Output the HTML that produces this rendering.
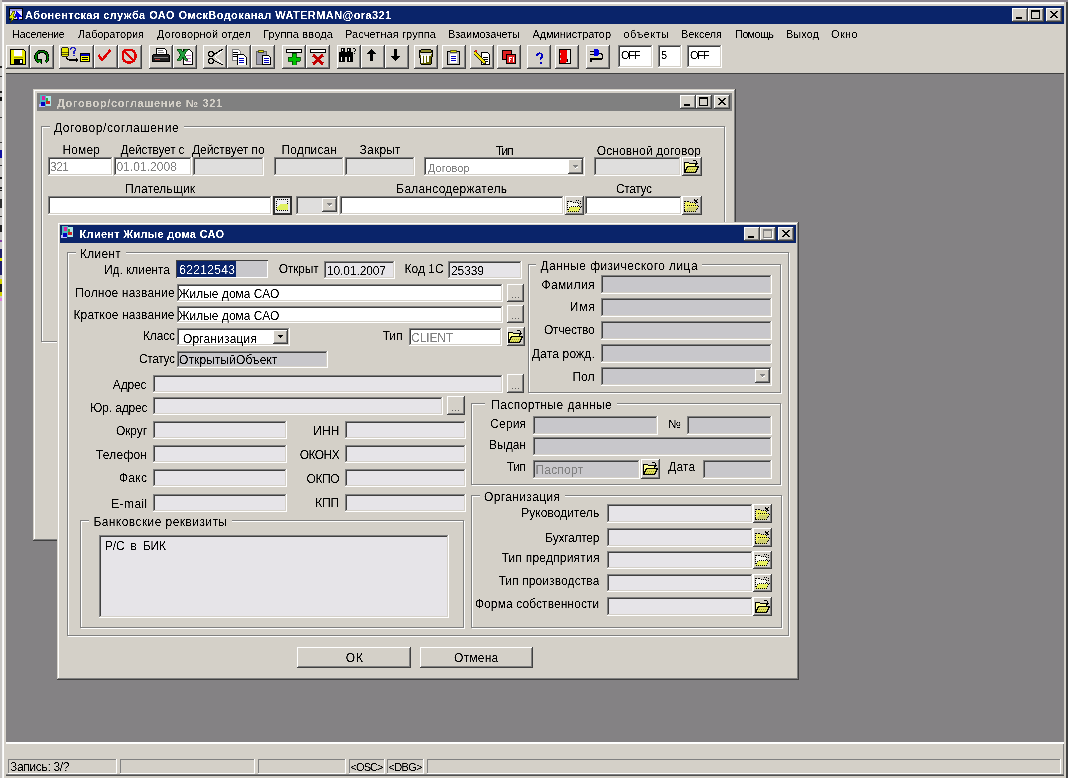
<!DOCTYPE html>
<html><head><meta charset="utf-8"><style>
html,body{margin:0;padding:0;}
body{width:1068px;height:778px;overflow:hidden;position:relative;background:#d4d0c8;font-family:"Liberation Sans",sans-serif;}
div,span,svg{position:absolute;}
svg{shape-rendering:crispEdges;}
span{white-space:pre;line-height:normal;filter:url(#th);}
div{box-sizing:border-box;}
</style></head><body>
<svg width="0" height="0" style="position:absolute"><filter id="th"><feComponentTransfer><feFuncA type="table" tableValues="0 0 1 1"/></feComponentTransfer></filter></svg>
<div style="left:0px;top:0px;width:1068px;height:778px;background:#d4d0c8"></div>
<div style="left:0px;top:0px;width:1068px;height:2px;background:#8c8690"></div>
<div style="left:0px;top:0px;width:2px;height:778px;background:#c8c6c4"></div>
<div style="left:0px;top:66px;width:2px;height:2px;background:#202020"></div>
<div style="left:0px;top:76px;width:2px;height:1px;background:#303030"></div>
<div style="left:0px;top:91px;width:2px;height:2px;background:#202020"></div>
<div style="left:0px;top:97px;width:2px;height:4px;background:#101010"></div>
<div style="left:0px;top:117px;width:2px;height:1px;background:#404040"></div>
<div style="left:0px;top:142px;width:2px;height:1px;background:#404040"></div>
<div style="left:0px;top:150px;width:2px;height:8px;background:#1010a0"></div>
<div style="left:0px;top:165px;width:2px;height:1px;background:#303030"></div>
<div style="left:0px;top:177px;width:2px;height:2px;background:#202020"></div>
<div style="left:0px;top:187px;width:2px;height:2px;background:#303030"></div>
<div style="left:0px;top:190px;width:2px;height:1px;background:#202020"></div>
<div style="left:0px;top:199px;width:2px;height:9px;background:#303030"></div>
<div style="left:0px;top:216px;width:2px;height:1px;background:#303030"></div>
<div style="left:0px;top:225px;width:2px;height:7px;background:#202020"></div>
<div style="left:0px;top:240px;width:2px;height:2px;background:#8040a0"></div>
<div style="left:0px;top:249px;width:2px;height:26px;background:#20206a"></div>
<div style="left:0px;top:258px;width:2px;height:3px;background:#e0e000"></div>
<div style="left:0px;top:279px;width:2px;height:17px;background:#d0d000"></div>
<div style="left:0px;top:284px;width:2px;height:8px;background:#202020"></div>
<div style="left:0px;top:298px;width:2px;height:3px;background:#e080e0"></div>
<div style="left:2px;top:2px;width:1066px;height:776px;box-shadow:inset 1px 1px #f4f4f4,inset 2px 2px #fff;background:#d4d0c8"></div>
<div style="left:1066px;top:2px;width:2px;height:776px;background:#404040"></div>
<div style="left:1064px;top:2px;width:2px;height:776px;background:#d4d0c8"></div>
<div style="left:6px;top:6px;width:1058px;height:18px;background:#0a246a"></div>
<svg style="position:absolute;left:8px;top:7px" width="16" height="16" viewBox="0 0 16 16">
<rect x="1.5" y="1.5" width="13" height="11" fill="#e0e0ff" stroke="#000"/><rect x="2" y="2" width="12" height="2" fill="#9090e0"/>
<path d="M8 4l6 6h-3l1 3h-2l-1-3l-2 1z" fill="#0000e0"/>
<path d="M5 4l-4 7h3l-2 5l6-7h-3l2-5z" fill="#e0f000" stroke="#303000" stroke-width="0.7"/></svg>
<span style="left:25.0px;top:9px;font-size:11px;color:#fff;font-weight:bold;letter-spacing:0.42px;">Абонентская служба ОАО ОмскВодоканал WATERMAN@ora321</span>
<div style="left:1012px;top:8px;width:16px;height:14px;box-shadow:inset -1px -1px #404040,inset 1px 1px #fff,inset -2px -2px #808080,inset 2px 2px #d4d0c8;background:#d4d0c8"></div>
<div style="left:1028px;top:8px;width:16px;height:14px;box-shadow:inset -1px -1px #404040,inset 1px 1px #fff,inset -2px -2px #808080,inset 2px 2px #d4d0c8;background:#d4d0c8"></div>
<div style="left:1046px;top:8px;width:16px;height:14px;box-shadow:inset -1px -1px #404040,inset 1px 1px #fff,inset -2px -2px #808080,inset 2px 2px #d4d0c8;background:#d4d0c8"></div>
<div style="left:1016px;top:17px;width:6px;height:2px;background:#000"></div>
<div style="left:1031px;top:10px;width:9px;height:9px;box-sizing:border-box;border:1px solid #000;border-top-width:2px"></div>
<svg style="position:absolute;left:1050px;top:11px" width="8" height="7" viewBox="0 0 8 7"><path d="M0 0h1v1h-1zM1 0h1v1h-1zM6 0h1v1h-1zM7 0h1v1h-1zM1 1h1v1h-1zM2 1h1v1h-1zM5 1h1v1h-1zM6 1h1v1h-1zM2 2h1v1h-1zM3 2h1v1h-1zM4 2h1v1h-1zM5 2h1v1h-1zM3 3h1v1h-1zM4 3h1v1h-1zM2 4h1v1h-1zM3 4h1v1h-1zM4 4h1v1h-1zM5 4h1v1h-1zM1 5h1v1h-1zM2 5h1v1h-1zM5 5h1v1h-1zM6 5h1v1h-1zM0 6h1v1h-1zM1 6h1v1h-1zM6 6h1v1h-1zM7 6h1v1h-1z" fill="#000"/></svg>
<span style="left:12.0px;top:28px;font-size:11px;color:#000;letter-spacing:-0.40px;">Население</span>
<span style="left:78.0px;top:28px;font-size:11px;color:#000;letter-spacing:-0.10px;">Лаборатория</span>
<span style="left:157.0px;top:28px;font-size:11px;color:#000;letter-spacing:0.13px;">Договорной отдел</span>
<span style="left:263.0px;top:28px;font-size:11px;color:#000;letter-spacing:0.19px;">Группа ввода</span>
<span style="left:345.0px;top:28px;font-size:11px;color:#000;letter-spacing:0.08px;">Расчетная группа</span>
<span style="left:448.0px;top:28px;font-size:11px;color:#000;letter-spacing:-0.14px;">Взаимозачеты</span>
<span style="left:532.5px;top:28px;font-size:11px;color:#000;letter-spacing:-0.07px;">Администратор</span>
<span style="left:623.5px;top:28px;font-size:11px;color:#000;letter-spacing:0.43px;">объекты</span>
<span style="left:681.0px;top:28px;font-size:11px;color:#000;letter-spacing:-0.17px;">Векселя</span>
<span style="left:735.0px;top:28px;font-size:11px;color:#000;letter-spacing:-0.70px;">Помощь</span>
<span style="left:786.0px;top:28px;font-size:11px;color:#000;letter-spacing:0.02px;">Выход</span>
<span style="left:831.0px;top:28px;font-size:11px;color:#000;letter-spacing:0.35px;">Окно</span>
<div style="left:6px;top:45px;width:24px;height:24px;box-shadow:inset -1px -1px #404040,inset 1px 1px #fff,inset -2px -2px #808080,inset 2px 2px #d4d0c8;background:#d4d0c8"></div>
<div style="left:30px;top:45px;width:24px;height:24px;box-shadow:inset -1px -1px #404040,inset 1px 1px #fff,inset -2px -2px #808080,inset 2px 2px #d4d0c8;background:#d4d0c8"></div>
<div style="left:59px;top:45px;width:35px;height:24px;box-shadow:inset -1px -1px #404040,inset 1px 1px #fff,inset -2px -2px #808080,inset 2px 2px #d4d0c8;background:#d4d0c8"></div>
<div style="left:94px;top:45px;width:24px;height:24px;box-shadow:inset -1px -1px #404040,inset 1px 1px #fff,inset -2px -2px #808080,inset 2px 2px #d4d0c8;background:#d4d0c8"></div>
<div style="left:118px;top:45px;width:24px;height:24px;box-shadow:inset -1px -1px #404040,inset 1px 1px #fff,inset -2px -2px #808080,inset 2px 2px #d4d0c8;background:#d4d0c8"></div>
<div style="left:149px;top:45px;width:24px;height:24px;box-shadow:inset -1px -1px #404040,inset 1px 1px #fff,inset -2px -2px #808080,inset 2px 2px #d4d0c8;background:#d4d0c8"></div>
<div style="left:173px;top:45px;width:24px;height:24px;box-shadow:inset -1px -1px #404040,inset 1px 1px #fff,inset -2px -2px #808080,inset 2px 2px #d4d0c8;background:#d4d0c8"></div>
<div style="left:203px;top:45px;width:24px;height:24px;box-shadow:inset -1px -1px #404040,inset 1px 1px #fff,inset -2px -2px #808080,inset 2px 2px #d4d0c8;background:#d4d0c8"></div>
<div style="left:227px;top:45px;width:24px;height:24px;box-shadow:inset -1px -1px #404040,inset 1px 1px #fff,inset -2px -2px #808080,inset 2px 2px #d4d0c8;background:#d4d0c8"></div>
<div style="left:251px;top:45px;width:24px;height:24px;box-shadow:inset -1px -1px #404040,inset 1px 1px #fff,inset -2px -2px #808080,inset 2px 2px #d4d0c8;background:#d4d0c8"></div>
<div style="left:282px;top:45px;width:24px;height:24px;box-shadow:inset -1px -1px #404040,inset 1px 1px #fff,inset -2px -2px #808080,inset 2px 2px #d4d0c8;background:#d4d0c8"></div>
<div style="left:306px;top:45px;width:24px;height:24px;box-shadow:inset -1px -1px #404040,inset 1px 1px #fff,inset -2px -2px #808080,inset 2px 2px #d4d0c8;background:#d4d0c8"></div>
<div style="left:337px;top:45px;width:24px;height:24px;box-shadow:inset -1px -1px #404040,inset 1px 1px #fff,inset -2px -2px #808080,inset 2px 2px #d4d0c8;background:#d4d0c8"></div>
<div style="left:361px;top:45px;width:24px;height:24px;box-shadow:inset -1px -1px #404040,inset 1px 1px #fff,inset -2px -2px #808080,inset 2px 2px #d4d0c8;background:#d4d0c8"></div>
<div style="left:385px;top:45px;width:24px;height:24px;box-shadow:inset -1px -1px #404040,inset 1px 1px #fff,inset -2px -2px #808080,inset 2px 2px #d4d0c8;background:#d4d0c8"></div>
<div style="left:414px;top:45px;width:24px;height:24px;box-shadow:inset -1px -1px #404040,inset 1px 1px #fff,inset -2px -2px #808080,inset 2px 2px #d4d0c8;background:#d4d0c8"></div>
<div style="left:442px;top:45px;width:24px;height:24px;box-shadow:inset -1px -1px #404040,inset 1px 1px #fff,inset -2px -2px #808080,inset 2px 2px #d4d0c8;background:#d4d0c8"></div>
<div style="left:470px;top:45px;width:24px;height:24px;box-shadow:inset -1px -1px #404040,inset 1px 1px #fff,inset -2px -2px #808080,inset 2px 2px #d4d0c8;background:#d4d0c8"></div>
<div style="left:497px;top:45px;width:24px;height:24px;box-shadow:inset -1px -1px #404040,inset 1px 1px #fff,inset -2px -2px #808080,inset 2px 2px #d4d0c8;background:#d4d0c8"></div>
<div style="left:527px;top:45px;width:24px;height:24px;box-shadow:inset -1px -1px #404040,inset 1px 1px #fff,inset -2px -2px #808080,inset 2px 2px #d4d0c8;background:#d4d0c8"></div>
<div style="left:555px;top:45px;width:24px;height:24px;box-shadow:inset -1px -1px #404040,inset 1px 1px #fff,inset -2px -2px #808080,inset 2px 2px #d4d0c8;background:#d4d0c8"></div>
<div style="left:586px;top:45px;width:24px;height:24px;box-shadow:inset -1px -1px #404040,inset 1px 1px #fff,inset -2px -2px #808080,inset 2px 2px #d4d0c8;background:#d4d0c8"></div>
<svg style="position:absolute;left:10px;top:49px" width="16" height="16" viewBox="0 0 16 16"><path d="M0.5 0.5h13l2 2v13h-15z" fill="#e8e800" stroke="#000"/><rect x="4" y="1" width="8" height="6" fill="#fff"/><path d="M3.5 8.5h9" stroke="#a0a000"/><rect x="4" y="10" width="9" height="6" fill="#000"/><rect x="10" y="11" width="2" height="3" fill="#fff"/></svg>
<svg style="position:absolute;left:34px;top:49px" width="16" height="16" viewBox="0 0 16 16"><path d="M5 13.5A6 6 0 1 1 11.5 13" fill="none" stroke="#000" stroke-width="3.2"/><path d="M5 13.5A6 6 0 1 1 11.5 13" fill="none" stroke="#008000" stroke-width="1.4"/><path d="M2 10h6v6z" fill="#000"/><path d="M3.5 11h3.5v3.5z" fill="#008000"/></svg>
<svg style="position:absolute;left:61px;top:47px" width="30" height="17" viewBox="0 0 30 17"><ellipse cx="4" cy="2" rx="3.5" ry="1.5" fill="#e8e800" stroke="#000" stroke-width="0.8"/><path d="M0.5 2v6a3.5 1.5 0 0 0 7 0v-6" fill="#e8e800" stroke="#000" stroke-width="0.8"/><path d="M0.5 4.5a3.5 1.5 0 0 0 7 0M0.5 6.5a3.5 1.5 0 0 0 7 0" fill="none" stroke="#000" stroke-width="0.6"/>
<path d="M10 2.5a2.2 2.2 0 1 1 3 2v2" fill="none" stroke="#2020c0" stroke-width="1.4"/><rect x="12" y="7.5" width="1.5" height="1.5" fill="#2020c0"/>
<path d="M5 10q1 3 4 3h6" fill="none" stroke="#000" stroke-width="1.3"/><path d="M15 11l3 2l-3 2z" fill="#000"/>
<rect x="19.5" y="6.5" width="9" height="8" fill="#ffff00" stroke="#000"/><rect x="20" y="7" width="8" height="2" fill="#0000c0"/><path d="M21 10.5h6M21 12.5h6" stroke="#000"/></svg>
<svg style="position:absolute;left:98px;top:49px" width="16" height="16" viewBox="0 0 16 16"><path d="M0.5 6l3.5 5l8.5-10" fill="none" stroke="#e00000" stroke-width="2.4"/></svg>
<svg style="position:absolute;left:122px;top:49px" width="16" height="16" viewBox="0 0 16 16"><circle cx="7" cy="7" r="6.6" fill="none" stroke="#e00000" stroke-width="2.6"/><path d="M2.5 2.5l9 9" stroke="#e00000" stroke-width="2.6"/></svg>
<svg style="position:absolute;left:152px;top:48px" width="19" height="15" viewBox="0 0 19 15"><path d="M4.5 0.5h8l2 2v4h-10z" fill="#fff" stroke="#000"/><path d="M6 2h5M6 4h6" stroke="#808080"/><path d="M0.5 8.5q0-2 2-2h13q2 0 2 2v4q0 1-1 1h-15q-1 0-1-1z" fill="#202020" stroke="#000"/><path d="M2 9h14" stroke="#808080"/><path d="M3 11h5" stroke="#c04040"/></svg>
<svg style="position:absolute;left:177px;top:49px" width="16" height="16" viewBox="0 0 16 16"><path d="M6.5 0.5h6l3 3v12h-9z" fill="#fff" stroke="#000"/><path d="M9 6h5M9 9h5M9 12h5" stroke="#c080c0"/><path d="M0 0h4l2 3l2-3h3l-3.5 5.5l3.5 5.5h-3l-2-3l-2 3h-4l3.5-5.5z" fill="#20a040" stroke="#004000" stroke-width="0.8"/></svg>
<svg style="position:absolute;left:207px;top:49px" width="16" height="16" viewBox="0 0 16 16"><circle cx="4" cy="5" r="2.5" fill="none" stroke="#000" stroke-width="1.6"/><circle cx="4" cy="12" r="2.5" fill="none" stroke="#000" stroke-width="1.6"/><path d="M6 6l10-6M6 11l10 5" stroke="#000" stroke-width="1.3"/><path d="M8 8l8-7M8 8l8 7" stroke="#fff" stroke-width="1"/></svg>
<svg style="position:absolute;left:231px;top:49px" width="16" height="16" viewBox="0 0 16 16"><path d="M1 0h6l2 2v9h-8z" fill="#fff" stroke="#808080"/><path d="M2 3h5M2 5h5M2 7h5" stroke="#000"/><path d="M6.5 5.5h6l2.5 2.5v8h-8.5z" fill="#fff" stroke="#000"/><path d="M8 9h5M8 11h5M8 13h5" stroke="#0000c0" stroke-width="1"/></svg>
<svg style="position:absolute;left:255px;top:49px" width="16" height="16" viewBox="0 0 16 16"><path d="M1.5 2.5h10v13h-10z" fill="#a0a0b0" stroke="#606060"/><path d="M4 1h4l1 2h-6z" fill="#e0e000" stroke="#000" stroke-width="0.6"/><path d="M7.5 6.5h6l2 2v7h-8z" fill="#fff" stroke="#000"/><path d="M9 9h5M9 11h5M9 13h5" stroke="#0000c0"/></svg>
<svg style="position:absolute;left:286px;top:49px" width="16" height="16" viewBox="0 0 16 16"><rect x="0.5" y="0.5" width="15" height="3" fill="#fff" stroke="#000"/><path d="M6 4h4v4h4v4h-4v4h-4v-4h-4v-4h4z" fill="#00c000" stroke="#004000" stroke-width="0.8"/></svg>
<svg style="position:absolute;left:310px;top:49px" width="16" height="16" viewBox="0 0 16 16"><rect x="0.5" y="0.5" width="15" height="3" fill="#fff" stroke="#000"/><path d="M3 6l10 9M13 6l-10 9" stroke="#c00000" stroke-width="3"/></svg>
<svg style="position:absolute;left:339px;top:48px" width="18" height="15" viewBox="0 0 18 15"><path d="M2 0h4v4h-4zM8 0h4v4h-4zM0 4h7v10h-7zM7 4h7v10h-7z" fill="#000"/><path d="M3 1h1v2h-1zM9 1h1v2h-1zM2 9h1v4h-1zM10 9h1v4h-1z" fill="#fff"/><path d="M6 9h2v5h-2z" fill="#d4d0c8"/><path d="M14 0h2v1h-2zM16 1h1v2h-1zM15 3h1v1h-1zM15 5h1v1h-1z" fill="#000"/></svg>
<svg style="position:absolute;left:365px;top:49px" width="16" height="16" viewBox="0 0 16 16"><path d="M6 0l5 5h-3.5v7h-3v-7h-3.5z" fill="#000"/></svg>
<svg style="position:absolute;left:389px;top:49px" width="16" height="16" viewBox="0 0 16 16"><path d="M6 12l5-5h-3.5v-7h-3v7h-3.5z" fill="#000"/></svg>
<svg style="position:absolute;left:418px;top:49px" width="16" height="16" viewBox="0 0 16 16"><path d="M1 2c0-1 14-1 14 0l-2 13h-10z" fill="#606000" stroke="#000"/><path d="M2 4h12l-1 3h-10z" fill="#e0e0e0"/><path d="M4 6v8M7 6v8M10 6v7" stroke="#fff" stroke-width="1.3"/><ellipse cx="8" cy="2" rx="6" ry="1.5" fill="#909030" stroke="#000"/></svg>
<svg style="position:absolute;left:446px;top:49px" width="16" height="16" viewBox="0 0 16 16"><rect x="1.5" y="2.5" width="12" height="13" fill="#c0c0c0" stroke="#000" stroke-width="1.5"/><rect x="4" y="5" width="7" height="9" fill="#fff"/><path d="M5 7h5M5 9h5M5 11h5" stroke="#0000c0"/><path d="M5 1h5l1 2h-7z" fill="#e0e000" stroke="#000" stroke-width="0.6"/></svg>
<svg style="position:absolute;left:474px;top:49px" width="16" height="16" viewBox="0 0 16 16"><path d="M7.5 3.5h6l2 2v10h-8z" fill="#fff" stroke="#000"/><path d="M9 8h5M9 10h5M9 12h5" stroke="#000"/><path d="M1 2l10 10l1 3l-3-1l-10-10z" fill="#f0e000" stroke="#000" stroke-width="0.8"/><circle cx="2" cy="2" r="1.6" fill="#e02020"/></svg>
<svg style="position:absolute;left:501px;top:49px" width="16" height="16" viewBox="0 0 16 16"><rect x="1.5" y="1.5" width="9" height="9" fill="#e02020" stroke="#000" stroke-width="1.2"/><rect x="5.5" y="5.5" width="9" height="9" fill="#e02020" stroke="#000" stroke-width="1.2"/><path d="M8 8v5M8 8h3M8 10h2M12 8v5" stroke="#fff" stroke-width="1"/></svg>
<svg style="position:absolute;left:531px;top:49px" width="16" height="16" viewBox="0 0 16 16"><path d="M6 7a2.6 2.6 0 1 1 3.5 2.3v2" fill="none" stroke="#0000c0" stroke-width="1.8"/><rect x="8.5" y="13" width="2" height="2" fill="#0000c0"/></svg>
<svg style="position:absolute;left:559px;top:49px" width="16" height="16" viewBox="0 0 16 16"><rect x="0.5" y="0.5" width="11" height="14" fill="#e8f4f0" stroke="#000"/><path d="M1 1h7v12l-2 1h-5z" fill="#f00000"/><path d="M1 4h1v2h-1zM1 9h1v2h-1z" fill="#d4d0c8"/><path d="M8 10h1v3h-1z" fill="#000"/></svg>
<svg style="position:absolute;left:590px;top:49px" width="16" height="16" viewBox="0 0 16 16"><path d="M0 2h4v1.4h-4zM0 5h4v1.4h-4z" fill="#000"/><path d="M4 0h3a2.5 3.5 0 0 1 0 7h-3z" fill="#0000e0"/><path d="M9 4.5h1.5a2 2.7 0 0 1 0 5.5h-9.5v3" fill="none" stroke="#000" stroke-width="1.4"/><path d="M2 8.5h7" stroke="#e0e080"/></svg>
<div style="left:618px;top:45px;width:35px;height:23px;background:#fff;box-shadow:inset -1px -1px #fff,inset 1px 1px #808080,inset -2px -2px #d4d0c8,inset 2px 2px #404040"></div>
<span style="left:621.0px;top:49px;font-size:11px;color:#000;letter-spacing:-1.25px;">OFF</span>
<div style="left:658px;top:45px;width:24px;height:23px;background:#fff;box-shadow:inset -1px -1px #fff,inset 1px 1px #808080,inset -2px -2px #d4d0c8,inset 2px 2px #404040"></div>
<span style="left:661.0px;top:49px;font-size:11px;color:#000;letter-spacing:-0.62px;">5</span>
<div style="left:687px;top:45px;width:35px;height:23px;background:#fff;box-shadow:inset -1px -1px #fff,inset 1px 1px #808080,inset -2px -2px #d4d0c8,inset 2px 2px #404040"></div>
<span style="left:690.0px;top:49px;font-size:11px;color:#000;letter-spacing:-1.25px;">OFF</span>
<div style="left:6px;top:73px;width:1058px;height:669px;background:#848284;box-shadow:inset 0 1px #404040"></div>
<div style="left:6px;top:742px;width:1058px;height:34px;background:#d4d0c8;box-shadow:inset 0 2px #fff,inset -1px 0 #808080"></div>
<div style="left:6px;top:774px;width:1058px;height:1px;background:#808080"></div>
<div style="left:6px;top:775px;width:1058px;height:1px;background:#505050"></div>
<div style="left:8px;top:759px;width:109px;height:15px;box-shadow:inset -1px -1px #fff,inset 1px 1px #808080"></div>
<div style="left:120px;top:759px;width:135px;height:15px;box-shadow:inset -1px -1px #fff,inset 1px 1px #808080"></div>
<div style="left:258px;top:759px;width:88px;height:15px;box-shadow:inset -1px -1px #fff,inset 1px 1px #808080"></div>
<div style="left:349px;top:759px;width:36px;height:15px;box-shadow:inset -1px -1px #fff,inset 1px 1px #808080"></div>
<div style="left:387px;top:759px;width:37px;height:15px;box-shadow:inset -1px -1px #fff,inset 1px 1px #808080"></div>
<div style="left:427px;top:759px;width:634px;height:15px;box-shadow:inset -1px -1px #fff,inset 1px 1px #808080"></div>
<span style="left:10.0px;top:760px;font-size:12px;color:#000;letter-spacing:-0.32px;">Запись: 3/?</span>
<span style="left:350.5px;top:761px;font-size:11px;color:#000;letter-spacing:-0.92px;">&lt;OSC&gt;</span>
<span style="left:388.5px;top:761px;font-size:11px;color:#000;letter-spacing:-0.67px;">&lt;DBG&gt;</span>
<div style="left:33px;top:89px;width:703px;height:452px;box-shadow:inset -1px -1px #404040,inset 1px 1px #d4d0c8,inset -2px -2px #808080,inset 2px 2px #fff;background:#d4d0c8"></div>
<div style="left:37px;top:93px;width:695px;height:18px;background:#808080"></div>
<svg style="position:absolute;left:39px;top:95px" width="13" height="13" viewBox="0 0 13 13"><rect x="1" y="0" width="6" height="11" fill="#50b8c0"/><rect x="7" y="1" width="5" height="10" fill="#b0e8e8"/><rect x="0" y="9" width="6" height="3" fill="#c0c0ff"/>
<circle cx="4.5" cy="3" r="2" fill="#e020a0"/><circle cx="9" cy="7.5" r="2" fill="#d02020"/><rect x="2" y="7" width="4" height="3.5" fill="#0000c0"/><rect x="7" y="3" width="2" height="3" fill="#30a040"/></svg>
<span style="left:57.0px;top:97px;font-size:11px;color:#d4d0c8;font-weight:bold;letter-spacing:0.62px;">Договор/соглашение № 321</span>
<div style="left:680px;top:95px;width:16px;height:14px;box-shadow:inset -1px -1px #404040,inset 1px 1px #fff,inset -2px -2px #808080,inset 2px 2px #d4d0c8;background:#d4d0c8"></div>
<div style="left:696px;top:95px;width:16px;height:14px;box-shadow:inset -1px -1px #404040,inset 1px 1px #fff,inset -2px -2px #808080,inset 2px 2px #d4d0c8;background:#d4d0c8"></div>
<div style="left:714px;top:95px;width:16px;height:14px;box-shadow:inset -1px -1px #404040,inset 1px 1px #fff,inset -2px -2px #808080,inset 2px 2px #d4d0c8;background:#d4d0c8"></div>
<div style="left:684px;top:104px;width:6px;height:2px;background:#000"></div>
<div style="left:699px;top:97px;width:9px;height:9px;box-sizing:border-box;border:1px solid #000;border-top-width:2px"></div>
<svg style="position:absolute;left:718px;top:98px" width="8" height="7" viewBox="0 0 8 7"><path d="M0 0h1v1h-1zM1 0h1v1h-1zM6 0h1v1h-1zM7 0h1v1h-1zM1 1h1v1h-1zM2 1h1v1h-1zM5 1h1v1h-1zM6 1h1v1h-1zM2 2h1v1h-1zM3 2h1v1h-1zM4 2h1v1h-1zM5 2h1v1h-1zM3 3h1v1h-1zM4 3h1v1h-1zM2 4h1v1h-1zM3 4h1v1h-1zM4 4h1v1h-1zM5 4h1v1h-1zM1 5h1v1h-1zM2 5h1v1h-1zM5 5h1v1h-1zM6 5h1v1h-1zM0 6h1v1h-1zM1 6h1v1h-1zM6 6h1v1h-1zM7 6h1v1h-1z" fill="#000"/></svg>
<div style="left:41px;top:126px;width:684px;height:216px;border:1px solid #808080;box-shadow:1px 1px 0 #fff,inset 1px 1px 0 #fff;box-sizing:border-box"></div>
<div style="left:50px;top:124px;width:134px;height:4px;background:#d4d0c8"></div>
<span style="left:54.0px;top:121px;font-size:12px;color:#000;letter-spacing:0.53px;">Договор/соглашение</span>
<span style="left:62.5px;top:143px;font-size:12px;color:#000;letter-spacing:0.14px;">Номер</span>
<span style="left:120.6px;top:143px;font-size:12px;color:#000;letter-spacing:-0.21px;">Действует с</span>
<span style="left:192.0px;top:143px;font-size:12px;color:#000;letter-spacing:-0.05px;">Действует по</span>
<span style="left:281.5px;top:143px;font-size:12px;color:#000;letter-spacing:0.14px;">Подписан</span>
<span style="left:359.6px;top:143px;font-size:12px;color:#000;letter-spacing:0.21px;">Закрыт</span>
<span style="left:496.0px;top:144px;font-size:12px;color:#000;letter-spacing:-1.25px;">Тип</span>
<span style="left:596.8px;top:144px;font-size:12px;color:#000;letter-spacing:0.11px;">Основной договор</span>
<div style="left:48px;top:157px;width:65px;height:19px;background:#fff;box-shadow:inset -1px -1px #fff,inset 1px 1px #808080,inset -2px -2px #d4d0c8,inset 2px 2px #404040"></div>
<span style="left:50.0px;top:160px;font-size:12px;color:#808080;letter-spacing:-0.51px;">321</span>
<div style="left:114px;top:157px;width:78px;height:19px;background:#fff;box-shadow:inset -1px -1px #fff,inset 1px 1px #808080,inset -2px -2px #d4d0c8,inset 2px 2px #404040"></div>
<span style="left:116.4px;top:160px;font-size:12px;color:#808080;letter-spacing:0.06px;">01.01.2008</span>
<div style="left:193px;top:157px;width:71px;height:19px;background:#dfdedd;box-shadow:inset -1px -1px #fff,inset 1px 1px #808080,inset -2px -2px #d4d0c8,inset 2px 2px #404040"></div>
<div style="left:274px;top:157px;width:70px;height:19px;background:#dfdedd;box-shadow:inset -1px -1px #fff,inset 1px 1px #808080,inset -2px -2px #d4d0c8,inset 2px 2px #404040"></div>
<div style="left:345px;top:157px;width:70px;height:19px;background:#dfdedd;box-shadow:inset -1px -1px #fff,inset 1px 1px #808080,inset -2px -2px #d4d0c8,inset 2px 2px #404040"></div>
<div style="left:424px;top:157px;width:161px;height:19px;background:#fff;box-shadow:inset -1px -1px #fff,inset 1px 1px #808080,inset -2px -2px #d4d0c8,inset 2px 2px #404040"></div>
<span style="left:428.0px;top:162px;font-size:11px;color:#808080;">Договор</span>
<div style="left:568px;top:159px;width:15px;height:15px;box-shadow:inset -1px -1px #404040,inset 1px 1px #fff,inset -2px -2px #808080,inset 2px 2px #d4d0c8;background:#d4d0c8"></div>
<div style="left:573px;top:165px;width:5px;height:1px;background:#808080"></div>
<div style="left:574px;top:166px;width:3px;height:1px;background:#808080"></div>
<div style="left:575px;top:167px;width:1px;height:1px;background:#808080"></div>
<div style="left:576px;top:167px;width:2px;height:1px;background:#fff"></div>
<div style="left:575px;top:168px;width:1px;height:1px;background:#fff"></div>
<div style="left:594px;top:157px;width:87px;height:19px;background:#dfdedd;box-shadow:inset -1px -1px #fff,inset 1px 1px #808080,inset -2px -2px #d4d0c8,inset 2px 2px #404040"></div>
<div style="left:682px;top:157px;width:20px;height:19px;box-shadow:inset -1px -1px #404040,inset 1px 1px #fff,inset -2px -2px #808080,inset 2px 2px #d4d0c8;background:#d4d0c8"></div>
<svg style="position:absolute;left:684px;top:160px" width="15" height="13" viewBox="0 0 15 13"><path d="M0.5 2.5h4l1 1h6v8.5h-11z" fill="#ffff99" stroke="#000"/>
<path d="M0.5 12.5l3-6h11l-3 6z" fill="#e0e060" stroke="#000"/><path d="M3 11h8M4 9h8" stroke="#a0a020" stroke-dasharray="1 1"/>
<path d="M8.5 1.5c1-1 3-1 4 0v2" fill="none" stroke="#000"/><path d="M11 3h3l-1.5 2z" fill="#000"/></svg>
<span style="left:125.0px;top:182px;font-size:12px;color:#000;letter-spacing:0.14px;">Плательщик</span>
<span style="left:396.3px;top:182px;font-size:12px;color:#000;letter-spacing:0.24px;">Балансодержатель</span>
<span style="left:616.0px;top:182px;font-size:12px;color:#000;letter-spacing:-0.39px;">Статус</span>
<div style="left:48px;top:196px;width:224px;height:19px;background:#fff;box-shadow:inset -1px -1px #fff,inset 1px 1px #808080,inset -2px -2px #d4d0c8,inset 2px 2px #404040"></div>
<div style="left:273px;top:196px;width:19px;height:19px;background:#e8e8e8;border:2px solid #303030"></div>
<svg style="position:absolute;left:276px;top:199px" width="13" height="13" viewBox="0 0 13 13">
<path d="M0.5 0.5h11v11h-11z" fill="#f0f0f0" stroke="#000" stroke-dasharray="1 1"/><path d="M1 8l3-3h8v6h-11z" fill="#e0f060"/><path d="M1 11.5h11" stroke="#000" stroke-dasharray="1 1"/></svg>
<div style="left:296px;top:196px;width:43px;height:19px;background:#dfdedd;box-shadow:inset -1px -1px #fff,inset 1px 1px #808080,inset -2px -2px #d4d0c8,inset 2px 2px #404040"></div>
<div style="left:322px;top:198px;width:15px;height:14px;box-shadow:inset -1px -1px #404040,inset 1px 1px #fff,inset -2px -2px #808080,inset 2px 2px #d4d0c8;background:#d4d0c8"></div>
<div style="left:327px;top:203px;width:5px;height:1px;background:#808080"></div>
<div style="left:328px;top:204px;width:3px;height:1px;background:#808080"></div>
<div style="left:329px;top:205px;width:1px;height:1px;background:#808080"></div>
<div style="left:330px;top:205px;width:2px;height:1px;background:#fff"></div>
<div style="left:329px;top:206px;width:1px;height:1px;background:#fff"></div>
<div style="left:340px;top:196px;width:224px;height:19px;background:#fff;box-shadow:inset -1px -1px #fff,inset 1px 1px #808080,inset -2px -2px #d4d0c8,inset 2px 2px #404040"></div>
<div style="left:565px;top:196px;width:19px;height:19px;box-shadow:inset -1px -1px #404040,inset 1px 1px #fff,inset -2px -2px #808080,inset 2px 2px #d4d0c8;background:#d4d0c8"></div>
<svg style="position:absolute;left:567px;top:199px" width="15" height="13" viewBox="0 0 15 13"><path d="M0.5 2.5h4l1 1h6v8.5h-11z" fill="#f8f8f0" stroke="#000" stroke-dasharray="1 1"/>
<path d="M0.5 12.5l3-5h11l-3 5z" fill="#e8f060" stroke="#000" stroke-dasharray="1 1"/>
<path d="M9 1.5h1M11 1h1M13 2v1M13 4v1" stroke="#000"/></svg>
<div style="left:585px;top:196px;width:97px;height:19px;background:#fff;box-shadow:inset -1px -1px #fff,inset 1px 1px #808080,inset -2px -2px #d4d0c8,inset 2px 2px #404040"></div>
<div style="left:682px;top:196px;width:20px;height:19px;box-shadow:inset -1px -1px #404040,inset 1px 1px #fff,inset -2px -2px #808080,inset 2px 2px #d4d0c8;background:#d4d0c8"></div>
<svg style="position:absolute;left:684px;top:199px" width="15" height="13" viewBox="0 0 15 13"><path d="M0.5 2.5h4l1 1h6v8.5h-11z" fill="#f0f060" stroke="#000" stroke-dasharray="1 1"/>
<path d="M0.5 12.5l3-6h11l-3 6z" fill="#d0d070" stroke="#000" stroke-dasharray="1 1"/><path d="M1 12l3-5h10" fill="none" stroke="#f0f060"/>
<path d="M10 0.5l3.5 3.5M13.5 0.5l-3.5 3.5" stroke="#000"/></svg>
<div style="left:57px;top:222px;width:742px;height:458px;box-shadow:inset -1px -1px #404040,inset 1px 1px #d4d0c8,inset -2px -2px #808080,inset 2px 2px #fff;background:#d4d0c8"></div>
<div style="left:60px;top:225px;width:736px;height:18px;background:#0a246a"></div>
<svg style="position:absolute;left:61px;top:226px" width="13" height="13" viewBox="0 0 13 13"><rect x="1" y="0" width="6" height="11" fill="#50b8c0"/><rect x="7" y="1" width="5" height="10" fill="#b0e8e8"/><rect x="0" y="9" width="6" height="3" fill="#c0c0ff"/>
<circle cx="4.5" cy="3" r="2" fill="#e020a0"/><circle cx="9" cy="7.5" r="2" fill="#d02020"/><rect x="2" y="7" width="4" height="3.5" fill="#0000c0"/><rect x="7" y="3" width="2" height="3" fill="#30a040"/></svg>
<span style="left:79.6px;top:228px;font-size:11px;color:#fff;font-weight:bold;letter-spacing:0.29px;">Клиент Жилые дома САО</span>
<div style="left:744px;top:227px;width:16px;height:14px;box-shadow:inset -1px -1px #404040,inset 1px 1px #fff,inset -2px -2px #808080,inset 2px 2px #d4d0c8;background:#d4d0c8"></div>
<div style="left:760px;top:227px;width:16px;height:14px;box-shadow:inset -1px -1px #404040,inset 1px 1px #fff,inset -2px -2px #808080,inset 2px 2px #d4d0c8;background:#d4d0c8"></div>
<div style="left:778px;top:227px;width:16px;height:14px;box-shadow:inset -1px -1px #404040,inset 1px 1px #fff,inset -2px -2px #808080,inset 2px 2px #d4d0c8;background:#d4d0c8"></div>
<div style="left:748px;top:236px;width:6px;height:2px;background:#000"></div>
<div style="left:763px;top:229px;width:9px;height:9px;box-sizing:border-box;border:1px solid #808080;border-top-width:2px"></div>
<div style="left:764px;top:231px;width:9px;height:8px;box-sizing:border-box;border-right:1px solid #fff;border-bottom:1px solid #fff"></div>
<svg style="position:absolute;left:782px;top:230px" width="8" height="7" viewBox="0 0 8 7"><path d="M0 0h1v1h-1zM1 0h1v1h-1zM6 0h1v1h-1zM7 0h1v1h-1zM1 1h1v1h-1zM2 1h1v1h-1zM5 1h1v1h-1zM6 1h1v1h-1zM2 2h1v1h-1zM3 2h1v1h-1zM4 2h1v1h-1zM5 2h1v1h-1zM3 3h1v1h-1zM4 3h1v1h-1zM2 4h1v1h-1zM3 4h1v1h-1zM4 4h1v1h-1zM5 4h1v1h-1zM1 5h1v1h-1zM2 5h1v1h-1zM5 5h1v1h-1zM6 5h1v1h-1zM0 6h1v1h-1zM1 6h1v1h-1zM6 6h1v1h-1zM7 6h1v1h-1z" fill="#000"/></svg>
<div style="left:67px;top:252px;width:722px;height:384px;border:1px solid #808080;box-shadow:1px 1px 0 #fff,inset 1px 1px 0 #fff;box-sizing:border-box"></div>
<div style="left:76px;top:250px;width:50px;height:4px;background:#d4d0c8"></div>
<span style="left:80.0px;top:247px;font-size:12px;color:#000;letter-spacing:0.26px;">Клиент</span>
<span style="left:104.0px;top:263px;font-size:12px;color:#000;letter-spacing:-0.07px;">Ид. клиента</span>
<div style="left:176px;top:260px;width:92px;height:18px;background:#c8c7cb;box-shadow:inset 1px 1px #404040,inset -1px -1px #fff"></div>
<div style="left:177px;top:261px;width:59px;height:16px;background:#0a246a"></div>
<span style="left:179.3px;top:263px;font-size:12px;color:#fff;letter-spacing:0.33px;">62212543</span>
<span style="left:278.8px;top:262px;font-size:12px;color:#000;letter-spacing:-0.17px;">Открыт</span>
<div style="left:324px;top:261px;width:71px;height:18px;background:#e6e4e8;box-shadow:inset -1px -1px #fff,inset 1px 1px #808080,inset -2px -2px #d4d0c8,inset 2px 2px #404040"></div>
<span style="left:327.0px;top:264px;font-size:12px;color:#000;letter-spacing:-0.12px;">10.01.2007</span>
<span style="left:404.6px;top:262px;font-size:12px;color:#000;letter-spacing:-0.02px;">Код 1С</span>
<div style="left:448px;top:261px;width:74px;height:18px;background:#e6e4e8;box-shadow:inset -1px -1px #fff,inset 1px 1px #808080,inset -2px -2px #d4d0c8,inset 2px 2px #404040"></div>
<span style="left:451.0px;top:264px;font-size:12px;color:#000;letter-spacing:-0.09px;">25339</span>
<span style="left:75.3px;top:286px;font-size:12px;color:#000;letter-spacing:0.17px;">Полное название</span>
<div style="left:177px;top:284px;width:326px;height:18px;background:#fff;box-shadow:inset -1px -1px #fff,inset 1px 1px #808080,inset -2px -2px #d4d0c8,inset 2px 2px #404040"></div>
<span style="left:178.4px;top:287px;font-size:12px;color:#000;letter-spacing:0.01px;">Жилые дома САО</span>
<div style="left:507px;top:284px;width:17px;height:18px;box-shadow:inset -1px -1px #404040,inset 1px 1px #fff,inset -2px -2px #808080,inset 2px 2px #d4d0c8;background:#d4d0c8"></div>
<div style="left:512px;top:297px;width:1px;height:1px;background:#606060"></div>
<div style="left:515px;top:297px;width:1px;height:1px;background:#606060"></div>
<div style="left:518px;top:297px;width:1px;height:1px;background:#606060"></div>
<span style="left:73.5px;top:308px;font-size:12px;color:#000;letter-spacing:0.12px;">Краткое название</span>
<div style="left:177px;top:306px;width:326px;height:17px;background:#fff;box-shadow:inset -1px -1px #fff,inset 1px 1px #808080,inset -2px -2px #d4d0c8,inset 2px 2px #404040"></div>
<span style="left:178.4px;top:309px;font-size:12px;color:#000;letter-spacing:0.01px;">Жилые дома САО</span>
<div style="left:507px;top:305px;width:17px;height:18px;box-shadow:inset -1px -1px #404040,inset 1px 1px #fff,inset -2px -2px #808080,inset 2px 2px #d4d0c8;background:#d4d0c8"></div>
<div style="left:512px;top:318px;width:1px;height:1px;background:#606060"></div>
<div style="left:515px;top:318px;width:1px;height:1px;background:#606060"></div>
<div style="left:518px;top:318px;width:1px;height:1px;background:#606060"></div>
<span style="left:143.0px;top:329px;font-size:12px;color:#000;letter-spacing:-0.17px;">Класс</span>
<div style="left:177px;top:328px;width:113px;height:18px;background:#fff;box-shadow:inset -1px -1px #fff,inset 1px 1px #808080,inset -2px -2px #d4d0c8,inset 2px 2px #404040"></div>
<span style="left:183.0px;top:332px;font-size:12px;color:#000;letter-spacing:0.16px;">Организация</span>
<div style="left:273px;top:330px;width:15px;height:14px;box-shadow:inset -1px -1px #404040,inset 1px 1px #fff,inset -2px -2px #808080,inset 2px 2px #d4d0c8;background:#d4d0c8"></div>
<div style="left:278px;top:335px;width:5px;height:1px;background:#000"></div>
<div style="left:279px;top:336px;width:3px;height:1px;background:#000"></div>
<div style="left:280px;top:337px;width:1px;height:1px;background:#000"></div>
<span style="left:382.5px;top:329px;font-size:12px;color:#000;">Тип</span>
<div style="left:409px;top:328px;width:93px;height:18px;background:#fff;box-shadow:inset -1px -1px #fff,inset 1px 1px #808080,inset -2px -2px #d4d0c8,inset 2px 2px #404040"></div>
<span style="left:411.2px;top:331px;font-size:12px;color:#808080;letter-spacing:-0.13px;">CLIENT</span>
<div style="left:507px;top:327px;width:18px;height:19px;box-shadow:inset -1px -1px #404040,inset 1px 1px #fff,inset -2px -2px #808080,inset 2px 2px #d4d0c8;background:#d4d0c8"></div>
<svg style="position:absolute;left:508px;top:330px" width="15" height="13" viewBox="0 0 15 13"><path d="M0.5 2.5h4l1 1h6v8.5h-11z" fill="#ffff99" stroke="#000"/>
<path d="M0.5 12.5l3-6h11l-3 6z" fill="#e0e060" stroke="#000"/><path d="M3 11h8M4 9h8" stroke="#a0a020" stroke-dasharray="1 1"/>
<path d="M8.5 1.5c1-1 3-1 4 0v2" fill="none" stroke="#000"/><path d="M11 3h3l-1.5 2z" fill="#000"/></svg>
<span style="left:139.0px;top:352px;font-size:12px;color:#000;letter-spacing:-0.39px;">Статус</span>
<div style="left:177px;top:351px;width:151px;height:17px;background:#c8c7cb;box-shadow:inset -1px -1px #fff,inset 1px 1px #808080,inset -2px -2px #d4d0c8,inset 2px 2px #404040"></div>
<span style="left:179.0px;top:353px;font-size:12px;color:#000;letter-spacing:0.11px;">ОткрытыйОбъект</span>
<span style="left:112.8px;top:378px;font-size:12px;color:#000;letter-spacing:-0.16px;">Адрес</span>
<div style="left:153px;top:375px;width:350px;height:18px;background:#e6e4e8;box-shadow:inset -1px -1px #fff,inset 1px 1px #808080,inset -2px -2px #d4d0c8,inset 2px 2px #404040"></div>
<div style="left:507px;top:374px;width:17px;height:19px;box-shadow:inset -1px -1px #404040,inset 1px 1px #fff,inset -2px -2px #808080,inset 2px 2px #d4d0c8;background:#d4d0c8"></div>
<div style="left:512px;top:388px;width:1px;height:1px;background:#606060"></div>
<div style="left:515px;top:388px;width:1px;height:1px;background:#606060"></div>
<div style="left:518px;top:388px;width:1px;height:1px;background:#606060"></div>
<span style="left:90.3px;top:401px;font-size:12px;color:#000;letter-spacing:-0.15px;">Юр. адрес</span>
<div style="left:153px;top:397px;width:290px;height:18px;background:#e6e4e8;box-shadow:inset -1px -1px #fff,inset 1px 1px #808080,inset -2px -2px #d4d0c8,inset 2px 2px #404040"></div>
<div style="left:447px;top:396px;width:18px;height:19px;box-shadow:inset -1px -1px #404040,inset 1px 1px #fff,inset -2px -2px #808080,inset 2px 2px #d4d0c8;background:#d4d0c8"></div>
<div style="left:452px;top:410px;width:1px;height:1px;background:#606060"></div>
<div style="left:455px;top:410px;width:1px;height:1px;background:#606060"></div>
<div style="left:458px;top:410px;width:1px;height:1px;background:#606060"></div>
<span style="left:116.0px;top:424px;font-size:12px;color:#000;letter-spacing:-0.12px;">Округ</span>
<div style="left:153px;top:421px;width:134px;height:18px;background:#e6e4e8;box-shadow:inset -1px -1px #fff,inset 1px 1px #808080,inset -2px -2px #d4d0c8,inset 2px 2px #404040"></div>
<span style="left:96.0px;top:448px;font-size:12px;color:#000;letter-spacing:0.20px;">Телефон</span>
<div style="left:153px;top:445px;width:134px;height:18px;background:#e6e4e8;box-shadow:inset -1px -1px #fff,inset 1px 1px #808080,inset -2px -2px #d4d0c8,inset 2px 2px #404040"></div>
<span style="left:118.9px;top:471px;font-size:12px;color:#000;letter-spacing:0.27px;">Факс</span>
<div style="left:153px;top:469px;width:134px;height:18px;background:#e6e4e8;box-shadow:inset -1px -1px #fff,inset 1px 1px #808080,inset -2px -2px #d4d0c8,inset 2px 2px #404040"></div>
<span style="left:111.2px;top:497px;font-size:12px;color:#000;letter-spacing:0.40px;">E-mail</span>
<div style="left:153px;top:494px;width:134px;height:18px;background:#e6e4e8;box-shadow:inset -1px -1px #fff,inset 1px 1px #808080,inset -2px -2px #d4d0c8,inset 2px 2px #404040"></div>
<span style="left:313.3px;top:424px;font-size:12px;color:#000;letter-spacing:0.02px;">ИНН</span>
<div style="left:345px;top:421px;width:121px;height:18px;background:#e6e4e8;box-shadow:inset -1px -1px #fff,inset 1px 1px #808080,inset -2px -2px #d4d0c8,inset 2px 2px #404040"></div>
<span style="left:299.7px;top:448px;font-size:12px;color:#000;letter-spacing:-0.55px;">ОКОНХ</span>
<div style="left:345px;top:445px;width:121px;height:18px;background:#e6e4e8;box-shadow:inset -1px -1px #fff,inset 1px 1px #808080,inset -2px -2px #d4d0c8,inset 2px 2px #404040"></div>
<span style="left:306.6px;top:472px;font-size:12px;color:#000;letter-spacing:-0.43px;">ОКПО</span>
<div style="left:345px;top:469px;width:121px;height:18px;background:#e6e4e8;box-shadow:inset -1px -1px #fff,inset 1px 1px #808080,inset -2px -2px #d4d0c8,inset 2px 2px #404040"></div>
<span style="left:315.2px;top:496px;font-size:12px;color:#000;letter-spacing:-0.12px;">КПП</span>
<div style="left:345px;top:494px;width:121px;height:18px;background:#e6e4e8;box-shadow:inset -1px -1px #fff,inset 1px 1px #808080,inset -2px -2px #d4d0c8,inset 2px 2px #404040"></div>
<div style="left:528px;top:264px;width:253px;height:129px;border:1px solid #808080;box-shadow:1px 1px 0 #fff,inset 1px 1px 0 #fff;box-sizing:border-box"></div>
<div style="left:536px;top:262px;width:166px;height:4px;background:#d4d0c8"></div>
<span style="left:540.5px;top:259px;font-size:12px;color:#000;letter-spacing:0.42px;">Данные физического лица</span>
<span style="left:541.5px;top:278px;font-size:12px;color:#000;letter-spacing:0.34px;">Фамилия</span>
<div style="left:601px;top:275px;width:171px;height:19px;background:#c8c7cb;box-shadow:inset -1px -1px #fff,inset 1px 1px #808080,inset -2px -2px #d4d0c8,inset 2px 2px #404040"></div>
<span style="left:569.8px;top:300px;font-size:12px;color:#000;letter-spacing:0.81px;">Имя</span>
<div style="left:601px;top:298px;width:171px;height:19px;background:#c8c7cb;box-shadow:inset -1px -1px #fff,inset 1px 1px #808080,inset -2px -2px #d4d0c8,inset 2px 2px #404040"></div>
<span style="left:544.0px;top:323px;font-size:12px;color:#000;letter-spacing:-0.21px;">Отчество</span>
<div style="left:601px;top:321px;width:171px;height:19px;background:#c8c7cb;box-shadow:inset -1px -1px #fff,inset 1px 1px #808080,inset -2px -2px #d4d0c8,inset 2px 2px #404040"></div>
<span style="left:531.8px;top:347px;font-size:12px;color:#000;letter-spacing:0.17px;">Дата рожд.</span>
<div style="left:601px;top:344px;width:171px;height:19px;background:#c8c7cb;box-shadow:inset -1px -1px #fff,inset 1px 1px #808080,inset -2px -2px #d4d0c8,inset 2px 2px #404040"></div>
<span style="left:572.4px;top:370px;font-size:12px;color:#000;letter-spacing:-0.02px;">Пол</span>
<div style="left:601px;top:367px;width:171px;height:19px;background:#c8c7cb;box-shadow:inset -1px -1px #fff,inset 1px 1px #808080,inset -2px -2px #d4d0c8,inset 2px 2px #404040"></div>
<div style="left:755px;top:369px;width:15px;height:14px;box-shadow:inset -1px -1px #404040,inset 1px 1px #fff,inset -2px -2px #808080,inset 2px 2px #d4d0c8;background:#d4d0c8"></div>
<div style="left:760px;top:374px;width:5px;height:1px;background:#808080"></div>
<div style="left:761px;top:375px;width:3px;height:1px;background:#808080"></div>
<div style="left:762px;top:376px;width:1px;height:1px;background:#808080"></div>
<div style="left:763px;top:376px;width:2px;height:1px;background:#fff"></div>
<div style="left:762px;top:377px;width:1px;height:1px;background:#fff"></div>
<div style="left:471px;top:403px;width:310px;height:82px;border:1px solid #808080;box-shadow:1px 1px 0 #fff,inset 1px 1px 0 #fff;box-sizing:border-box"></div>
<div style="left:485px;top:401px;width:132px;height:4px;background:#d4d0c8"></div>
<span style="left:491.3px;top:398px;font-size:12px;color:#000;letter-spacing:0.41px;">Паспортные данные</span>
<span style="left:490.3px;top:417px;font-size:12px;color:#000;letter-spacing:0.12px;">Серия</span>
<div style="left:533px;top:416px;width:125px;height:19px;background:#c8c7cb;box-shadow:inset -1px -1px #fff,inset 1px 1px #808080,inset -2px -2px #d4d0c8,inset 2px 2px #404040"></div>
<span style="left:668.3px;top:417px;font-size:12px;color:#000;letter-spacing:0.13px;">№</span>
<div style="left:687px;top:416px;width:85px;height:19px;background:#c8c7cb;box-shadow:inset -1px -1px #fff,inset 1px 1px #808080,inset -2px -2px #d4d0c8,inset 2px 2px #404040"></div>
<span style="left:489.0px;top:438px;font-size:12px;color:#000;letter-spacing:0.02px;">Выдан</span>
<div style="left:533px;top:437px;width:239px;height:19px;background:#c8c7cb;box-shadow:inset -1px -1px #fff,inset 1px 1px #808080,inset -2px -2px #d4d0c8,inset 2px 2px #404040"></div>
<span style="left:506.7px;top:460px;font-size:12px;color:#000;letter-spacing:-0.35px;">Тип</span>
<div style="left:533px;top:460px;width:107px;height:19px;background:#c8c7cb;box-shadow:inset -1px -1px #fff,inset 1px 1px #808080,inset -2px -2px #d4d0c8,inset 2px 2px #404040"></div>
<span style="left:535.5px;top:463px;font-size:12px;color:#808080;letter-spacing:0.19px;">Паспорт</span>
<div style="left:641px;top:459px;width:19px;height:20px;box-shadow:inset -1px -1px #404040,inset 1px 1px #fff,inset -2px -2px #808080,inset 2px 2px #d4d0c8;background:#d4d0c8"></div>
<svg style="position:absolute;left:643px;top:462px" width="15" height="13" viewBox="0 0 15 13"><path d="M0.5 2.5h4l1 1h6v8.5h-11z" fill="#ffff99" stroke="#000"/>
<path d="M0.5 12.5l3-6h11l-3 6z" fill="#e0e060" stroke="#000"/><path d="M3 11h8M4 9h8" stroke="#a0a020" stroke-dasharray="1 1"/>
<path d="M8.5 1.5c1-1 3-1 4 0v2" fill="none" stroke="#000"/><path d="M11 3h3l-1.5 2z" fill="#000"/></svg>
<span style="left:668.3px;top:460px;font-size:12px;color:#000;letter-spacing:0.14px;">Дата</span>
<div style="left:703px;top:460px;width:69px;height:19px;background:#c8c7cb;box-shadow:inset -1px -1px #fff,inset 1px 1px #808080,inset -2px -2px #d4d0c8,inset 2px 2px #404040"></div>
<div style="left:471px;top:495px;width:311px;height:133px;border:1px solid #808080;box-shadow:1px 1px 0 #fff,inset 1px 1px 0 #fff;box-sizing:border-box"></div>
<div style="left:480px;top:493px;width:85px;height:4px;background:#d4d0c8"></div>
<span style="left:484.0px;top:490px;font-size:12px;color:#000;letter-spacing:0.36px;">Организация</span>
<span style="left:521.2px;top:506px;font-size:12px;color:#000;letter-spacing:0.06px;">Руководитель</span>
<div style="left:607px;top:504px;width:146px;height:19px;background:#e6e4e8;box-shadow:inset -1px -1px #fff,inset 1px 1px #808080,inset -2px -2px #d4d0c8,inset 2px 2px #404040"></div>
<div style="left:753px;top:504px;width:19px;height:19px;box-shadow:inset -1px -1px #404040,inset 1px 1px #fff,inset -2px -2px #808080,inset 2px 2px #d4d0c8;background:#d4d0c8"></div>
<svg style="position:absolute;left:755px;top:507px" width="15" height="13" viewBox="0 0 15 13"><path d="M0.5 2.5h4l1 1h6v8.5h-11z" fill="#f0f060" stroke="#000" stroke-dasharray="1 1"/>
<path d="M0.5 12.5l3-6h11l-3 6z" fill="#d0d070" stroke="#000" stroke-dasharray="1 1"/><path d="M1 12l3-5h10" fill="none" stroke="#f0f060"/>
<path d="M10 0.5l3.5 3.5M13.5 0.5l-3.5 3.5" stroke="#000"/></svg>
<span style="left:545.3px;top:531px;font-size:12px;color:#000;letter-spacing:-0.26px;">Бухгалтер</span>
<div style="left:607px;top:528px;width:146px;height:19px;background:#e6e4e8;box-shadow:inset -1px -1px #fff,inset 1px 1px #808080,inset -2px -2px #d4d0c8,inset 2px 2px #404040"></div>
<div style="left:753px;top:528px;width:19px;height:19px;box-shadow:inset -1px -1px #404040,inset 1px 1px #fff,inset -2px -2px #808080,inset 2px 2px #d4d0c8;background:#d4d0c8"></div>
<svg style="position:absolute;left:755px;top:531px" width="15" height="13" viewBox="0 0 15 13"><path d="M0.5 2.5h4l1 1h6v8.5h-11z" fill="#f0f060" stroke="#000" stroke-dasharray="1 1"/>
<path d="M0.5 12.5l3-6h11l-3 6z" fill="#d0d070" stroke="#000" stroke-dasharray="1 1"/><path d="M1 12l3-5h10" fill="none" stroke="#f0f060"/>
<path d="M10 0.5l3.5 3.5M13.5 0.5l-3.5 3.5" stroke="#000"/></svg>
<span style="left:501.5px;top:551px;font-size:12px;color:#000;letter-spacing:0.21px;">Тип предприятия</span>
<div style="left:607px;top:551px;width:146px;height:18px;background:#e6e4e8;box-shadow:inset -1px -1px #fff,inset 1px 1px #808080,inset -2px -2px #d4d0c8,inset 2px 2px #404040"></div>
<div style="left:753px;top:551px;width:19px;height:18px;box-shadow:inset -1px -1px #404040,inset 1px 1px #fff,inset -2px -2px #808080,inset 2px 2px #d4d0c8;background:#d4d0c8"></div>
<svg style="position:absolute;left:755px;top:553px" width="15" height="13" viewBox="0 0 15 13"><path d="M0.5 2.5h4l1 1h6v8.5h-11z" fill="#f8f8f0" stroke="#000" stroke-dasharray="1 1"/>
<path d="M0.5 12.5l3-5h11l-3 5z" fill="#e8f060" stroke="#000" stroke-dasharray="1 1"/>
<path d="M9 1.5h1M11 1h1M13 2v1M13 4v1" stroke="#000"/></svg>
<span style="left:498.4px;top:574px;font-size:12px;color:#000;letter-spacing:0.10px;">Тип производства</span>
<div style="left:607px;top:574px;width:146px;height:18px;background:#e6e4e8;box-shadow:inset -1px -1px #fff,inset 1px 1px #808080,inset -2px -2px #d4d0c8,inset 2px 2px #404040"></div>
<div style="left:753px;top:574px;width:19px;height:18px;box-shadow:inset -1px -1px #404040,inset 1px 1px #fff,inset -2px -2px #808080,inset 2px 2px #d4d0c8;background:#d4d0c8"></div>
<svg style="position:absolute;left:755px;top:576px" width="15" height="13" viewBox="0 0 15 13"><path d="M0.5 2.5h4l1 1h6v8.5h-11z" fill="#f8f8f0" stroke="#000" stroke-dasharray="1 1"/>
<path d="M0.5 12.5l3-5h11l-3 5z" fill="#e8f060" stroke="#000" stroke-dasharray="1 1"/>
<path d="M9 1.5h1M11 1h1M13 2v1M13 4v1" stroke="#000"/></svg>
<span style="left:474.9px;top:597px;font-size:12px;color:#000;letter-spacing:0.09px;">Форма собственности</span>
<div style="left:607px;top:597px;width:146px;height:19px;background:#e6e4e8;box-shadow:inset -1px -1px #fff,inset 1px 1px #808080,inset -2px -2px #d4d0c8,inset 2px 2px #404040"></div>
<div style="left:753px;top:597px;width:19px;height:19px;box-shadow:inset -1px -1px #404040,inset 1px 1px #fff,inset -2px -2px #808080,inset 2px 2px #d4d0c8;background:#d4d0c8"></div>
<svg style="position:absolute;left:755px;top:600px" width="15" height="13" viewBox="0 0 15 13"><path d="M0.5 2.5h4l1 1h6v8.5h-11z" fill="#ffff99" stroke="#000"/>
<path d="M0.5 12.5l3-6h11l-3 6z" fill="#e0e060" stroke="#000"/><path d="M3 11h8M4 9h8" stroke="#a0a020" stroke-dasharray="1 1"/>
<path d="M8.5 1.5c1-1 3-1 4 0v2" fill="none" stroke="#000"/><path d="M11 3h3l-1.5 2z" fill="#000"/></svg>
<div style="left:80px;top:520px;width:384px;height:108px;border:1px solid #808080;box-shadow:1px 1px 0 #fff,inset 1px 1px 0 #fff;box-sizing:border-box"></div>
<div style="left:89px;top:518px;width:143px;height:4px;background:#d4d0c8"></div>
<span style="left:93.4px;top:515px;font-size:12px;color:#000;letter-spacing:0.43px;">Банковские реквизиты</span>
<div style="left:99px;top:535px;width:350px;height:83px;background:#e6e4e8;box-shadow:inset -1px -1px #fff,inset 1px 1px #808080,inset -2px -2px #d4d0c8,inset 2px 2px #404040"></div>
<span style="left:105.0px;top:539px;font-size:12px;color:#000;letter-spacing:-0.22px;">Р/С  в  БИК</span>
<div style="left:297px;top:647px;width:114px;height:21px;box-shadow:inset -1px -1px #404040,inset 1px 1px #fff,inset -2px -2px #808080,inset 2px 2px #d4d0c8;background:#d4d0c8"></div>
<span style="left:345.7px;top:651px;font-size:12px;color:#000;letter-spacing:0.98px;">ОК</span>
<div style="left:420px;top:647px;width:113px;height:21px;box-shadow:inset -1px -1px #404040,inset 1px 1px #fff,inset -2px -2px #808080,inset 2px 2px #d4d0c8;background:#d4d0c8"></div>
<span style="left:453.9px;top:651px;font-size:12px;color:#000;letter-spacing:0.27px;">Отмена</span>
</body></html>
